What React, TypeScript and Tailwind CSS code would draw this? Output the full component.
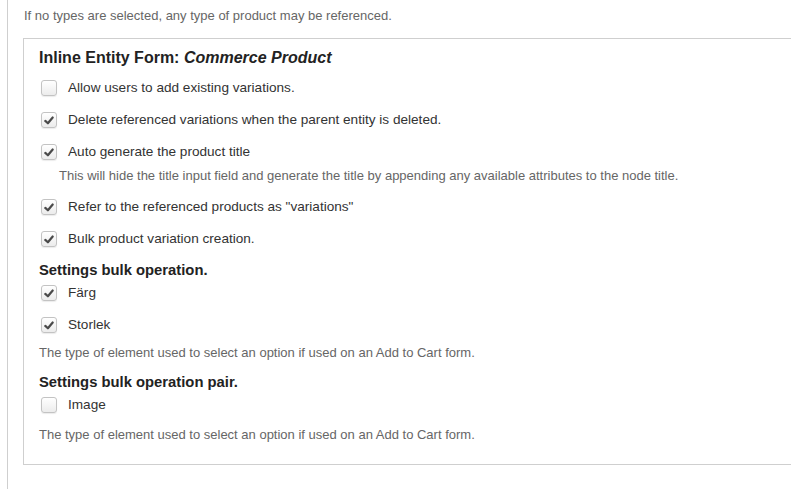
const font = { fontFamily: '"Liberation Sans", Arial, sans-serif' };

function Checkbox({ checked }: { checked: boolean }) {
  return (
    <span className="relative flex h-[16px] w-[16px] shrink-0 items-center justify-center rounded-[3px] border border-[#c3c3c3] bg-gradient-to-b from-white to-[#ececec] shadow-[0_1px_1px_rgba(0,0,0,0.08)]">
      {checked && (
        <svg width="10" height="9" viewBox="0 0 10 9" fill="none">
          <path d="M1.3 4.9 L3.9 7.3 L8.7 1.5" stroke="#4a4a4a" strokeWidth="2.2" strokeLinecap="round" strokeLinejoin="round" />
        </svg>
      )}
    </span>
  );
}

function Option({ label, checked, className = "" }: { label: string; checked: boolean; className?: string }) {
  return (
    <div className={`flex h-[24px] items-center pl-[2px] ${className}`}>
      <Checkbox checked={checked} />
      <span className="ml-[11px] text-[13.6px] text-[#333]">{label}</span>
    </div>
  );
}

export default function App() {
  return (
    <div className="min-h-[489px] bg-white pl-[7px]" style={font}>
      <div className="min-h-[489px] border-l border-[#cfcfcf] pl-[15px]">
        <p className="flex h-[32px] items-center pl-[1px] text-[13px] text-[#666]">
          If no types are selected, any type of product may be referenced.
        </p>

        <div className="mt-[6px] border border-r-0 border-[#cfcfcf] pt-[1px] pb-[17px] pl-[15px]">
          <h3 className="flex h-[36px] items-center text-[16px] font-bold text-[#222]">
            Inline Entity Form:&nbsp;<em>Commerce Product</em>
          </h3>

          <Option label="Allow users to add existing variations." checked={false} />
          <Option label="Delete referenced variations when the parent entity is deleted." checked className="mt-[8px]" />
          <Option label="Auto generate the product title" checked className="mt-[8px]" />
          <p className="flex h-[24px] items-center pl-[20px] text-[13px] text-[#666]">
            This will hide the title input field and generate the title by appending any available attributes to the node title.
          </p>
          <Option label={'Refer to the referenced products as "variations"'} checked className="mt-[7px]" />
          <Option label="Bulk product variation creation." checked className="mt-[8px]" />

          <h4 className="mt-[8px] flex h-[22px] items-center text-[14.8px] font-bold text-[#222]">
            Settings bulk operation.
          </h4>
          <Option label="Färg" checked />
          <Option label="Storlek" checked className="mt-[8px]" />
          <p className="mt-[4px] flex h-[24px] items-center text-[13px] text-[#666]">
            The type of element used to select an option if used on an Add to Cart form.
          </p>

          <h4 className="mt-[6px] flex h-[22px] items-center text-[14.8px] font-bold text-[#222]">
            Settings bulk operation pair.
          </h4>
          <Option label="Image" checked={false} />
          <p className="mt-[6px] flex h-[24px] items-center text-[13px] text-[#666]">
            The type of element used to select an option if used on an Add to Cart form.
          </p>
        </div>
      </div>
    </div>
  );
}
